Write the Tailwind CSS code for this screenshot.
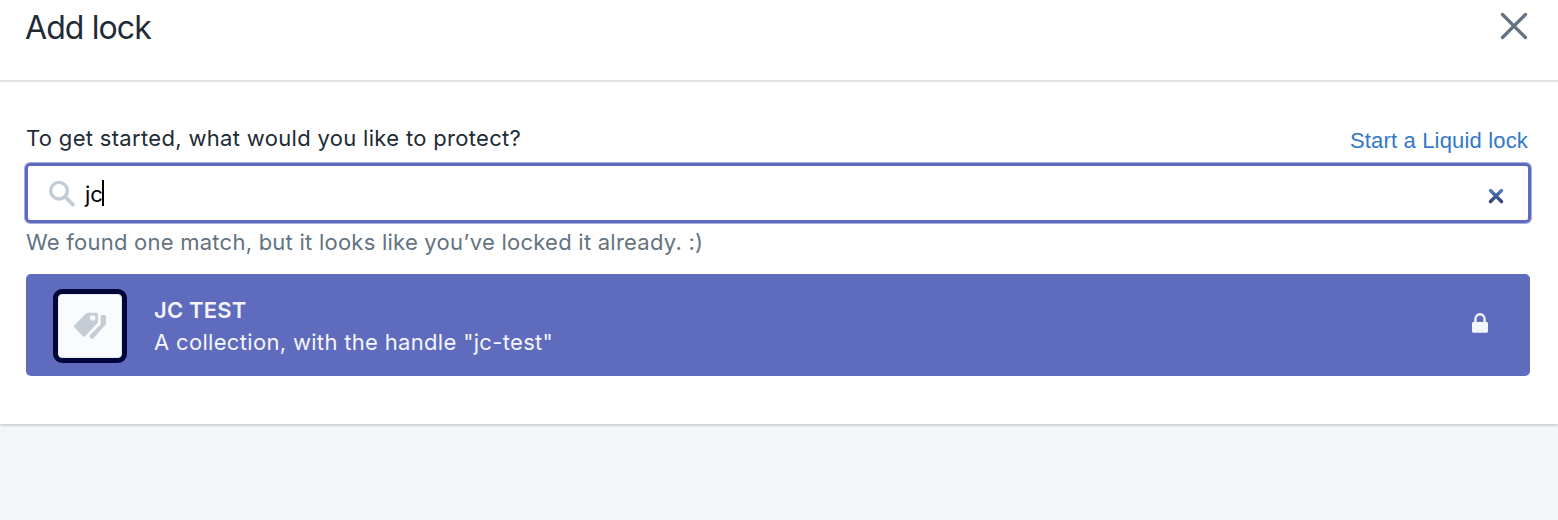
<!DOCTYPE html>
<html lang="en">
<head>
<meta charset="utf-8">
<title>Add lock</title>
<script src="https://cdn.jsdelivr.net/npm/@tailwindcss/browser@4"></script>
</head>
<body class="h-[520px] overflow-hidden bg-[#f4f6f8] font-['Inter',sans-serif] text-[22px] text-[#212b36]">
<main class="h-[424px] bg-white shadow-[0_1px_3px_rgba(33,43,54,0.28)]">
  <header class="flex h-[82px] items-start justify-between border-b-2 border-[#dfe3e8] pl-[25px] pr-[30px]">
    <h1 class="mt-[8px] whitespace-nowrap text-[32px] leading-[40px] tracking-[-0.9px]">Add lock</h1>
    <button class="mt-[12px]" aria-label="Close">
      <svg class="block" width="28" height="28" viewBox="0 0 28 28" fill="none" stroke="#637381" stroke-width="3.3" stroke-linecap="round"><path d="M2.500 2.500l23 23M25.500 2.500l-23 23"/></svg>
    </button>
  </header>
  <section class="px-[25px] pt-[40px]">
    <div class="flex h-[41px] justify-between pl-[1px] pr-[5px]">
      <label class="whitespace-nowrap leading-[32px] tracking-[0.32px]">To get started, what would you like to protect?</label>
      <a class="mt-[3px] whitespace-nowrap font-['Liberation_Sans',sans-serif] leading-[32px] tracking-[0.17px] text-[#3278c8]">Start a Liquid lock</a>
    </div>
    <div class="flex h-[60px] w-[1506px] items-center rounded-[5px] border-[3px] border-[#5f6bbd] pl-[20px] pr-[24px] shadow-[0_0_0_1px_rgba(95,107,189,0.55)]">
      <svg class="mt-[2px] shrink-0" width="28" height="28" viewBox="0 0 28 28" fill="none" stroke="#c4cdd5" stroke-width="3.4"><circle cx="11" cy="10.7" r="8.3"/><path d="M17 16.7l8 8" stroke-width="3.8" stroke-linecap="round"/></svg>
      <span class="ml-[9px] mt-[2px] leading-[32px] text-black">jc</span>
      <span class="-ml-[1px] h-[26px] w-[2px] bg-black"></span>
      <svg class="ml-auto mt-[5px]" width="16" height="16" viewBox="0 0 16 16" fill="none" stroke="url(#clear)" stroke-width="3.4" stroke-linecap="round"><defs><linearGradient id="clear" gradientUnits="userSpaceOnUse" x1="0" y1="0" x2="0" y2="16"><stop stop-color="#5a88d0"/><stop offset="1" stop-color="#293a64"/></linearGradient></defs><path d="M2.500 2.500l11 11M13.500 2.500l-11 11"/></svg>
    </div>
    <p class="h-[51px] whitespace-nowrap pl-[1px] pt-[3px] leading-[32px] tracking-[0.24px] text-[#637381]">We found one match, but it looks like you’ve locked it already. :)</p>
    <div class="mx-px flex h-[102px] w-[1504px] items-center rounded-[5px] bg-[#5f6bbd] pl-[27px] pr-[42px] text-[#f4f5fa]">
      <div class="mt-[2px] flex size-[74px] shrink-0 items-center justify-center rounded-[9px] bg-[#000639]">
        <div class="flex size-[64px] items-center justify-center rounded-[4px] border border-[#e6e9ec] bg-[#fafbfc]">
          <svg width="34" height="28" viewBox="73 312 34 28" fill="#c4cdd5"><path fill-rule="evenodd" d="M88 312.700H96.500Q98 312.700 98 314.200V321.500Q98 322.500 97.200 323.300L85 336.200Q84 337.200 83 336.200L74.300 327.300Q73.300 326.200 74.300 325.200L86 313.500Q86.800 312.700 88 312.700ZM92.700 315.200a2.800 2.800 0 1 0 0 5.600a2.800 2.800 0 1 0 0-5.600Z"/><path d="M101.800 315H104.500Q106 315 106 316.500V323.200Q106 324.300 105.200 325.100L93.300 338.500Q92.300 339.500 91.300 338.500L89.800 337.200Q88.800 336.200 89.800 335.200L100 325Q100.700 324.200 100.700 323V316.200Q100.700 315 101.800 315Z"/></svg>
        </div>
      </div>
      <div class="ml-[27px] mt-[2px] whitespace-nowrap leading-[32px]">
        <div class="font-semibold tracking-[0.2px]">JC TEST</div>
        <div class="tracking-[0.32px]">A collection, with the handle "jc-test"</div>
      </div>
      <svg class="mb-[4px] ml-auto" width="16" height="20" viewBox="0 0 16 20" fill="none"><path d="M3.400 10V6.400a4.600 5.200 0 0 1 9.200 0v3.600" stroke="#f4f5fa" stroke-width="2.400"/><rect y="9" width="16" height="10.700" rx="1.400" fill="#f4f5fa"/></svg>
    </div>
  </section>
</main>
</body>
</html>
